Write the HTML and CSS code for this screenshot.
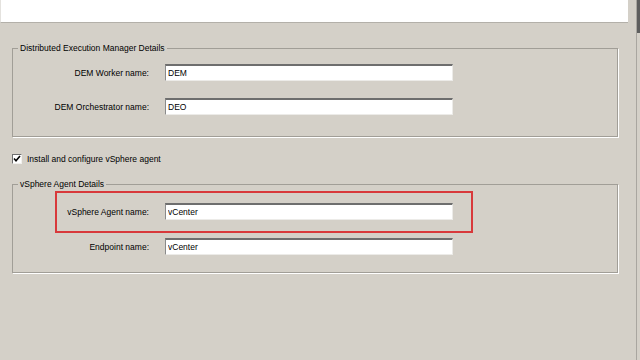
FILE: index.html
```html
<!DOCTYPE html>
<html lang="en">
<head>
  <meta charset="UTF-8">
  <meta name="viewport" content="width=device-width, initial-scale=1.0">
  <title>vSphere Agent Setup</title>
  <link rel="stylesheet" href="styles.css">
</head>
<body>
  <div class="window">
    <div class="banner"></div>
    <div class="form">
      <fieldset class="group dem">
        <legend>Distributed Execution Manager Details</legend>
        <div class="row">
          <label for="dem-worker">DEM Worker name:</label>
          <input type="text" id="dem-worker" value="DEM">
        </div>
        <div class="row">
          <label for="dem-orch">DEM Orchestrator name:</label>
          <input type="text" id="dem-orch" value="DEO">
        </div>
      </fieldset>

      <div class="check-row">
        <span class="check">
          <svg width="8" height="8" viewBox="0 0 8 8"><path d="M1 3.5 L3 5.8 L7 1" fill="none" stroke="#000" stroke-width="1.6"/></svg>
        </span>
        <span>Install and configure vSphere agent</span>
      </div>

      <fieldset class="group agent">
        <legend>vSphere Agent Details</legend>
        <div class="row highlighted">
          <label for="agent-name">vSphere Agent name:</label>
          <input type="text" id="agent-name" value="vCenter">
          <span class="callout"></span>
        </div>
        <div class="row">
          <label for="endpoint">Endpoint name:</label>
          <input type="text" id="endpoint" value="vCenter">
        </div>
      </fieldset>
    </div>
  </div>
  <div class="edge"></div>
</body>
</html>
```

FILE: styles.css
```css
body {
  margin: 0;
  width: 640px;
  height: 360px;
  overflow: hidden;
  display: flex;
  background: #d4d0c8;
  color: #000;
  font-family: 'Liberation Sans', Arial, sans-serif;
  font-size: 8.5px;
}
.window {
  flex: 1;
  border-right: 1px solid #a9a6a0;
}
.edge {
  width: 3px;
  background: linear-gradient(#5e5e5e 0 33px, #d4d0c8 33px);
}
.banner {
  height: 22px;
  margin-right: 8px;
  background: #fff;
  border-left: 1px solid #e4e2de;
  border-bottom: 1px solid #b3b0a9;
}
.form {
  padding: 0 18px 0 12px;
}
.group {
  margin: 19px 0 0;
  padding: 9px 0 21px;
  border: 1px solid #a19e97;
  box-shadow: 1px 1px 0 #fff;
  min-width: 0;
}
.group legend {
  margin-left: 5px;
  padding: 0 2px;
  line-height: 13px;
}
.group.agent {
  margin-top: 13px;
  padding: 12px 0 17px;
}
.row {
  display: grid;
  width: fit-content;
  grid-template-columns: 136px 288px;
  column-gap: 16px;
  align-items: center;
}
.row + .row {
  margin-top: 17px;
}
.agent .row + .row {
  margin-top: 18px;
}
.row label {
  text-align: right;
}
.row input {
  height: 17px;
  box-sizing: border-box;
  margin: 0;
  padding: 0 2px;
  background: #fff;
  border-style: solid;
  border-width: 2px 1px 1px 1px;
  border-color: #6e6e6e #ecebe8 #ecebe8 #8a8a8a;
  font-family: inherit;
  font-size: 8.5px;
  color: #000;
  outline: none;
}
.highlighted {
  position: relative;
}
.callout {
  position: absolute;
  left: 42px;
  right: -20px;
  top: -12px;
  bottom: -13px;
  border: 2px solid #d8393b;
  pointer-events: none;
}
.check-row {
  display: flex;
  align-items: center;
  gap: 5px;
  height: 13px;
  margin-top: 15px;
}
.check {
  width: 10px;
  height: 10px;
  box-sizing: border-box;
  display: flex;
  align-items: center;
  justify-content: center;
  background: #fff;
  border-style: solid;
  border-width: 1px;
  border-color: #6e6e6e #f2f1ee #f2f1ee #6e6e6e;
}
```
